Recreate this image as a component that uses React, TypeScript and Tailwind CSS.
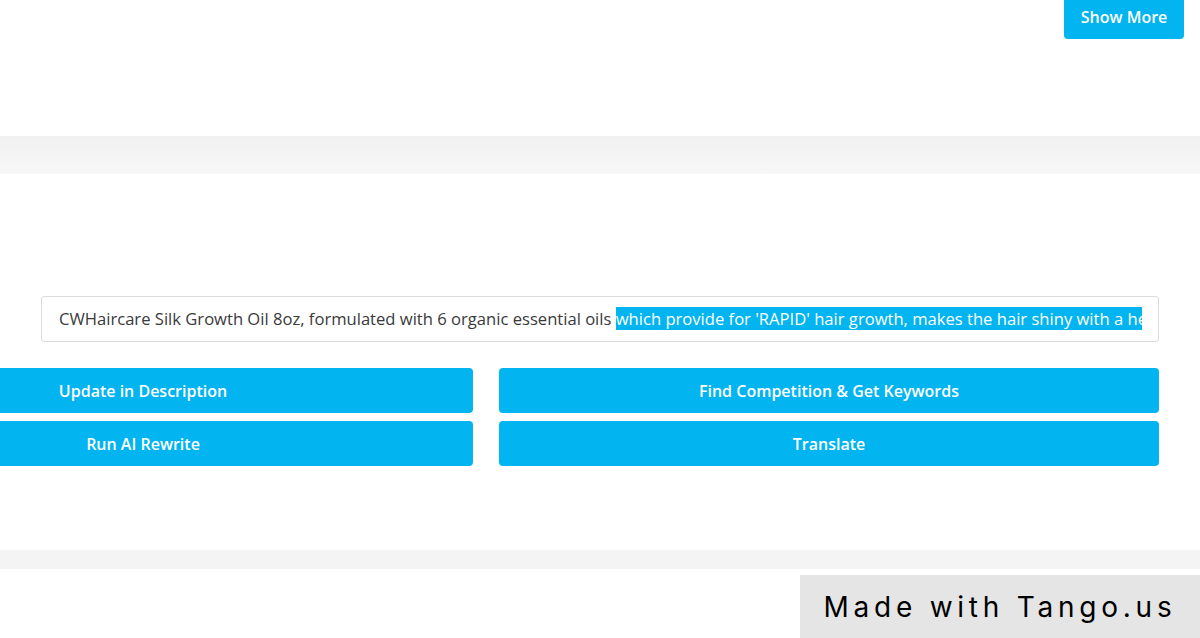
export default function App() {
  const plain = "CWHaircare Silk Growth Oil 8oz, formulated with 6 organic essential oils ";
  const selected =
    "which provide for 'RAPID' hair growth, makes the hair shiny with a healthy glow";

  return (
    <div className="relative h-[638px] w-[1200px] overflow-hidden bg-white font-['Open_Sans',sans-serif]">
      <section className="flex h-[136px] justify-end pr-4">
        <button className="h-[39px] w-[120px] rounded-b-[4px] bg-[#02b4f0] pb-[5px] text-[16px] font-semibold text-white">
          Show More
        </button>
      </section>

      <div className="h-[38px] bg-gradient-to-b from-[#f1f1f1] to-[#f7f7f7]" />

      <section className="flex h-[376px] flex-col pl-[41px] pr-[41px] pt-[122px]">
        <div className="flex h-[46px] items-center overflow-hidden whitespace-nowrap rounded-[3px] border border-[#dcdcdc] bg-white pl-[17px] pr-[16px] text-[16.6px] text-[#3a3a3a]">
          <div className="overflow-hidden">
            <span>{plain}</span>
            <span className="bg-[#02b4f0] text-white">{selected}</span>
          </div>
        </div>

        <div className="ml-[-228px] mt-[26px] grid grid-cols-2 gap-x-[26px] gap-y-[8px]">
          {["Update in Description", "Find Competition & Get Keywords", "Run AI Rewrite", "Translate"].map(
            (label) => (
              <button
                key={label}
                className="h-[45px] rounded-[4px] bg-[#02b4f0] text-[16px] font-semibold text-white"
              >
                {label}
              </button>
            )
          )}
        </div>
      </section>

      <div className="h-[19px] bg-[#f4f4f4]" />

      <div className="absolute bottom-0 right-0 flex h-[63px] w-[400px] items-center justify-center bg-[#e5e5e5]">
        <span className="text-[28px] tracking-[0.17em] text-black font-['Inter',sans-serif]">
          Made with Tango.us
        </span>
      </div>
    </div>
  );
}
